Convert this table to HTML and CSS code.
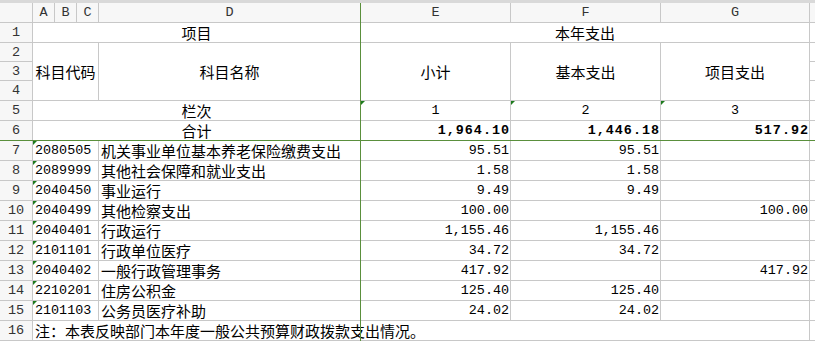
FILE: index.html
```html
<!DOCTYPE html>
<html lang="zh">
<head>
<meta charset="utf-8">
<title>本年支出</title>
<link rel="stylesheet" href="styles.css">
</head>
<body>
<div class="sheet">
  <div class="topbar"></div>
  <div class="grid">
    <div class="corner"></div>
    <div class="ch">A</div><div class="ch">B</div><div class="ch">C</div><div class="ch">D</div>
    <div class="ch">E</div><div class="ch">F</div><div class="ch">G</div><div class="ch"></div>

    <div class="rh">1</div>
    <div class="c ctr span4">项目</div>
    <div class="c ctr span3">本年支出</div>
    <div class="c"></div>

    <div class="rh">2</div>
    <div class="c ctr span3 rows3">科目代码</div>
    <div class="c ctr rows3">科目名称</div>
    <div class="c ctr rows3">小计</div>
    <div class="c ctr rows3">基本支出</div>
    <div class="c ctr rows3">项目支出</div>
    <div class="c"></div>
    <div class="rh">3</div>
    <div class="c"></div>
    <div class="rh">4</div>
    <div class="c"></div>

    <div class="rh">5</div>
    <div class="c ctr span4">栏次</div>
    <div class="c ctr num tri">1</div>
    <div class="c ctr num tri">2</div>
    <div class="c ctr num tri">3</div>
    <div class="c"></div>

    <div class="rh">6</div>
    <div class="c ctr span4">合计</div>
    <div class="c r num bold">1,964.10</div>
    <div class="c r num bold">1,446.18</div>
    <div class="c r num bold">517.92</div>
    <div class="c"></div>

    <div class="rh">7</div>
    <div class="c code span3 tri">2080505</div>
    <div class="c name">机关事业单位基本养老保险缴费支出</div>
    <div class="c r num">95.51</div>
    <div class="c r num">95.51</div>
    <div class="c r num"></div>
    <div class="c"></div>

    <div class="rh">8</div>
    <div class="c code span3 tri">2089999</div>
    <div class="c name">其他社会保障和就业支出</div>
    <div class="c r num">1.58</div>
    <div class="c r num">1.58</div>
    <div class="c r num"></div>
    <div class="c"></div>

    <div class="rh">9</div>
    <div class="c code span3 tri">2040450</div>
    <div class="c name">事业运行</div>
    <div class="c r num">9.49</div>
    <div class="c r num">9.49</div>
    <div class="c r num"></div>
    <div class="c"></div>

    <div class="rh">10</div>
    <div class="c code span3 tri">2040499</div>
    <div class="c name">其他检察支出</div>
    <div class="c r num">100.00</div>
    <div class="c r num"></div>
    <div class="c r num">100.00</div>
    <div class="c"></div>

    <div class="rh">11</div>
    <div class="c code span3 tri">2040401</div>
    <div class="c name">行政运行</div>
    <div class="c r num">1,155.46</div>
    <div class="c r num">1,155.46</div>
    <div class="c r num"></div>
    <div class="c"></div>

    <div class="rh">12</div>
    <div class="c code span3 tri">2101101</div>
    <div class="c name">行政单位医疗</div>
    <div class="c r num">34.72</div>
    <div class="c r num">34.72</div>
    <div class="c r num"></div>
    <div class="c"></div>

    <div class="rh">13</div>
    <div class="c code span3 tri">2040402</div>
    <div class="c name">一般行政管理事务</div>
    <div class="c r num">417.92</div>
    <div class="c r num"></div>
    <div class="c r num">417.92</div>
    <div class="c"></div>

    <div class="rh">14</div>
    <div class="c code span3 tri">2210201</div>
    <div class="c name">住房公积金</div>
    <div class="c r num">125.40</div>
    <div class="c r num">125.40</div>
    <div class="c r num"></div>
    <div class="c"></div>

    <div class="rh">15</div>
    <div class="c code span3 tri">2101103</div>
    <div class="c name">公务员医疗补助</div>
    <div class="c r num">24.02</div>
    <div class="c r num">24.02</div>
    <div class="c r num"></div>
    <div class="c"></div>

    <div class="rh">16</div>
    <div class="c note span7">注：本表反映部门本年度一般公共预算财政拨款支出情况。</div>
    <div class="c"></div>
  </div>
  <div class="freeze-v"></div>
  <div class="freeze-h"></div>
</div>
</body>
</html>
```

FILE: styles.css
```css
html, body {
  margin: 0;
  padding: 0;
  background: #ffffff;
}

.sheet {
  position: relative;
  width: 815px;
  height: 341px;
  overflow: hidden;
}

.topbar {
  height: 3px;
  background: #d9d9d9;
}

.grid {
  display: grid;
  grid-template-columns: 32px 21px 21px 21px 261px 149px 149px 148px 1fr;
  grid-template-rows: 19px 19px 18px 18px 19px repeat(12, 19px);
  gap: 1px;
  padding-bottom: 1px;
  background: #c8c8c8;
}

.corner,
.ch,
.rh {
  background: #f7f7f7;
  color: #333333;
  font-family: "Liberation Mono", "DejaVu Sans Mono", monospace;
  font-size: 13.5px;
  display: flex;
  align-items: center;
  justify-content: center;
  line-height: 19px;
}

.c {
  position: relative;
  background: #ffffff;
  color: #000000;
  font-family: "Noto Sans CJK SC", "Noto Sans CJK JP", sans-serif;
  font-size: 15px;
  line-height: 19px;
  display: flex;
  align-items: center;
  white-space: nowrap;
}

.ctr {
  justify-content: center;
}

.r {
  justify-content: flex-end;
  padding-right: 1px;
}

.num,
.code {
  font-family: "Liberation Mono", "DejaVu Sans Mono", monospace;
  font-size: 13.4px;
}

.bold {
  font-weight: bold;
  letter-spacing: 1px;
  padding-right: 0;
}

.code {
  padding-left: 2px;
}

.name {
  padding-left: 2px;
}

.note {
  padding-left: 2px;
}

.span3 { grid-column: span 3; }
.span4 { grid-column: span 4; }
.span7 { grid-column: span 7; }
.rows3 { grid-row: span 3; }

.tri::before {
  content: "";
  position: absolute;
  top: 0;
  left: 0;
  border-top: 4px solid #1d7a1d;
  border-right: 4px solid transparent;
}

.freeze-v {
  position: absolute;
  left: 360px;
  top: 3px;
  width: 1px;
  bottom: 0;
  background: #5a8f3c;
}

.freeze-h {
  position: absolute;
  left: 0;
  right: 0;
  top: 140px;
  height: 1px;
  background: #5a8f3c;
}
```
